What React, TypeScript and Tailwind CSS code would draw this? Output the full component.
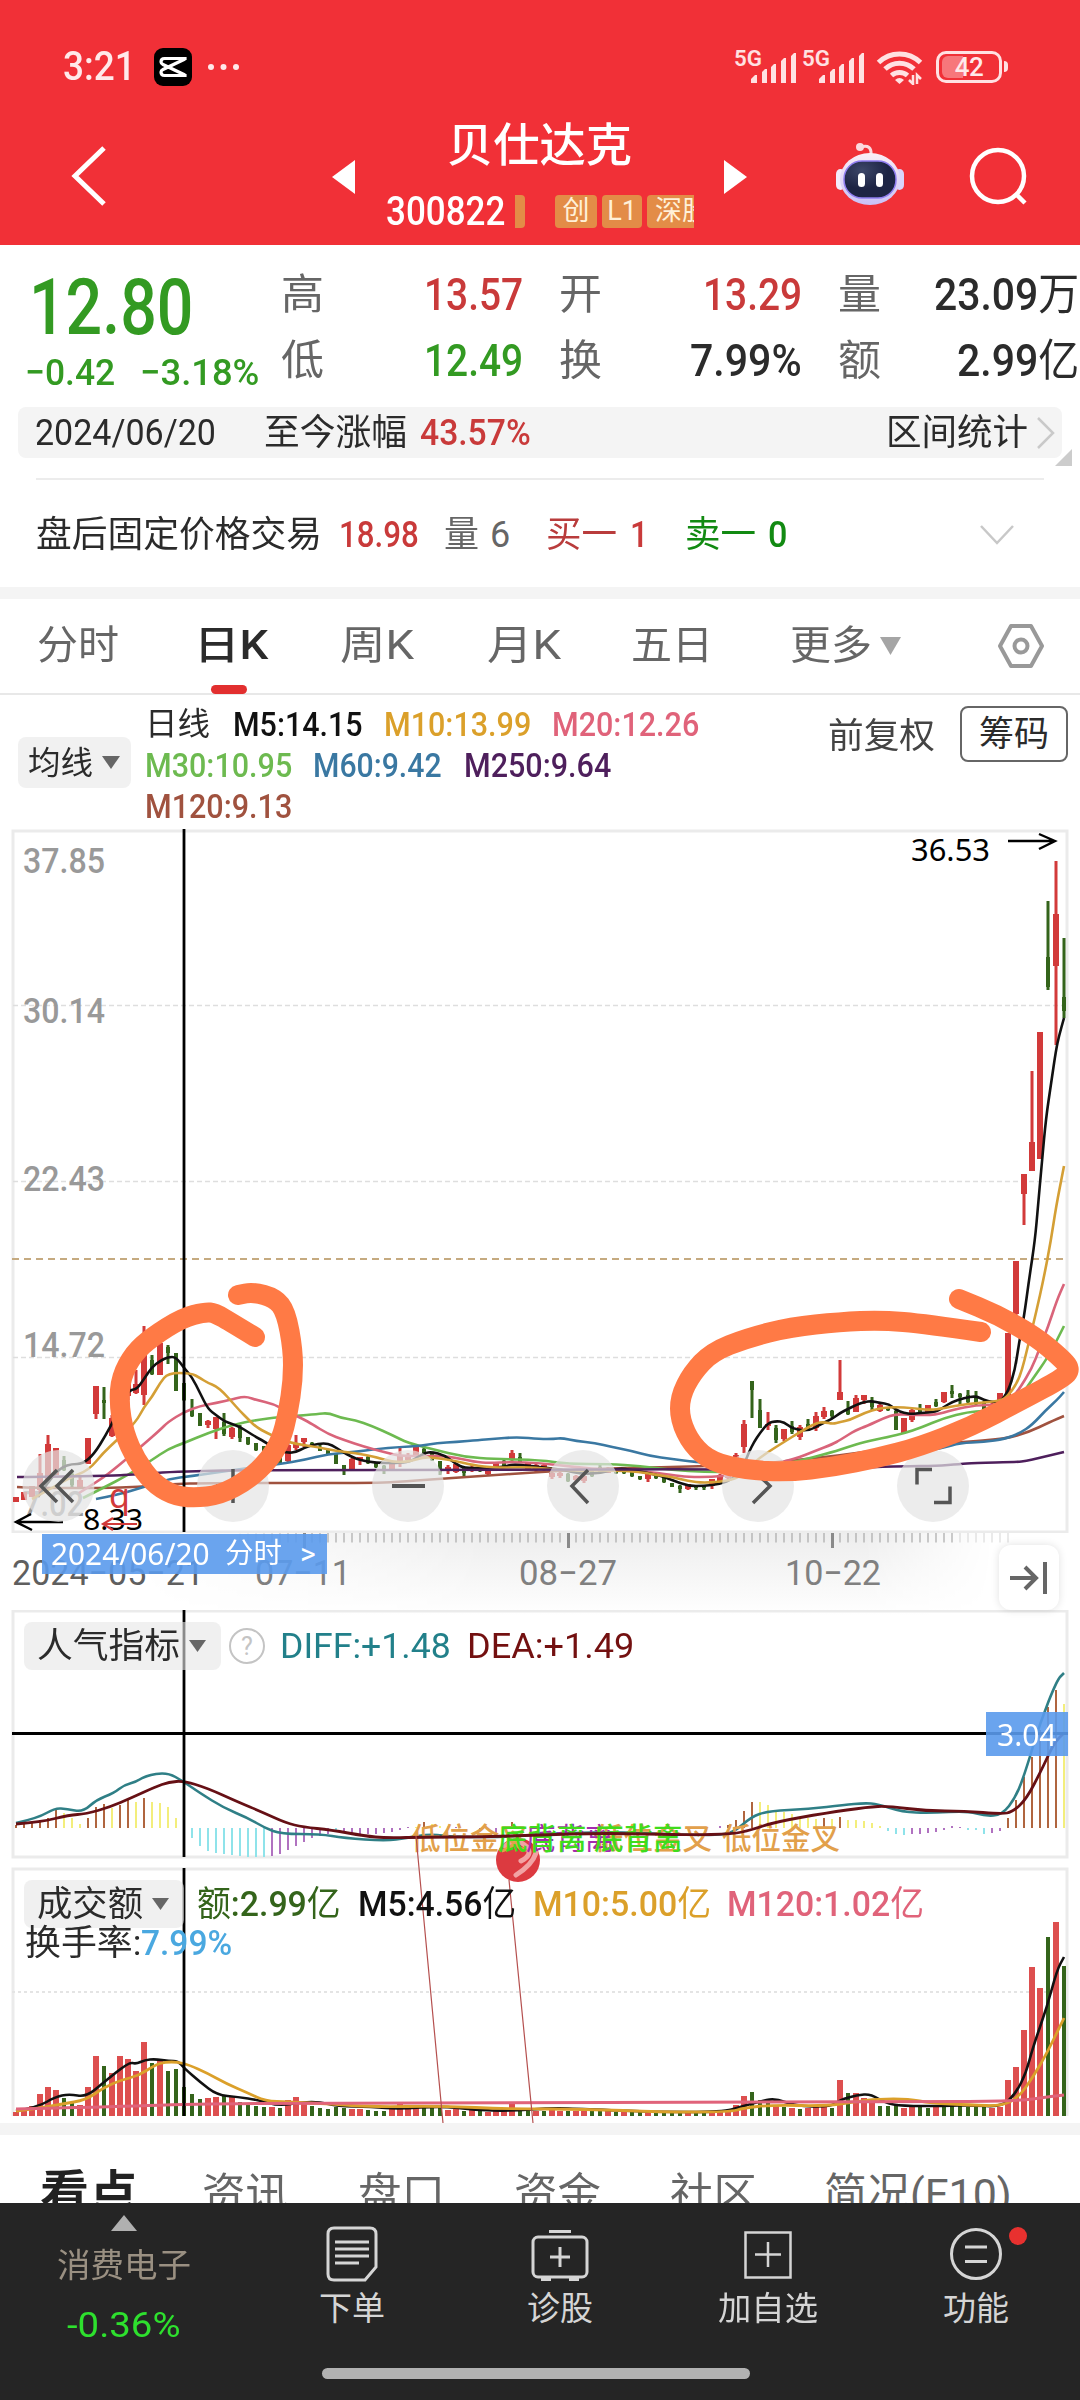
import React, { useLayoutEffect, useRef, useState } from 'react';

type Pt = [number, number];

const FONT = 'font-[Roboto,"Noto_Sans_CJK_SC",sans-serif]';

// Text squeezed or stretched to an exact width, like the condensed digits of the app font
const Fit = ({ w, className = '', children }: { w: number; className?: string; children: React.ReactNode }) => {
  const ref = useRef<HTMLSpanElement>(null);
  const [scale, setScale] = useState(1);

  useLayoutEffect(() => {
    if (ref.current && ref.current.offsetWidth) setScale(w / ref.current.offsetWidth);
  }, [w]);

  return (
    <span className={`block shrink-0 ${className}`} style={{ width: w }}>
      <span ref={ref} className="inline-block whitespace-nowrap origin-left" style={{ transform: `scaleX(${scale})` }}>
        {children}
      </span>
    </span>
  );
};

const pts = (s: string): Pt[] => s.split(' ').map((p) => p.split(',').map(Number) as Pt);

const smooth = (s: string) => {
  const p = pts(s);
  let d = `M${p[0][0]} ${p[0][1]}`;
  for (let i = 1; i < p.length - 1; i++) {
    const mx = (p[i][0] + p[i + 1][0]) / 2;
    const my = (p[i][1] + p[i + 1][1]) / 2;
    d += ` Q${p[i][0]} ${p[i][1]} ${mx} ${my}`;
  }
  const last = p[p.length - 1];
  return `${d} L${last[0]} ${last[1]}`;
};

const xAt = (i: number) => 16 + 8 * i;

const RED = '#d23a3a';
const GREEN = '#34641b';

// index, high, low, body top, body bottom, up/down
const CANDLES: [number, number, number, number, number, string][] = [
  [0, 1497, 1502, 1497, 1502, 'r'], [1, 1492, 1500, 1492, 1500, 'r'], [2, 1486, 1497, 1486, 1497, 'r'],
  [3, 1454, 1493, 1473, 1490, 'r'], [4, 1435, 1480, 1444, 1480, 'r'], [5, 1448, 1475, 1448, 1475, 'r'],
  [6, 1456, 1471, 1460, 1470, 'g'], [7, 1470, 1487, 1474, 1485, 'g'], [8, 1477, 1488, 1480, 1488, 'r'],
  [9, 1438, 1464, 1438, 1464, 'r'], [10, 1386, 1419, 1386, 1414, 'r'], [11, 1387, 1419, 1400, 1403, 'g'],
  [12, 1415, 1437, 1418, 1436, 'r'], [13, 1390, 1425, 1392, 1425, 'r'], [14, 1375, 1400, 1380, 1396, 'r'],
  [15, 1370, 1394, 1384, 1393, 'r'], [16, 1326, 1405, 1355, 1395, 'r'], [17, 1355, 1375, 1360, 1374, 'g'],
  [18, 1343, 1375, 1343, 1375, 'r'], [19, 1345, 1364, 1347, 1353, 'g'], [20, 1353, 1391, 1353, 1391, 'g'],
  [21, 1383, 1401, 1383, 1400, 'g'], [22, 1399, 1417, 1410, 1416, 'g'], [23, 1413, 1426, 1413, 1426, 'g'],
  [24, 1420, 1428, 1421, 1425, 'r'], [25, 1417, 1439, 1417, 1429, 'r'], [26, 1413, 1436, 1422, 1434, 'g'],
  [27, 1427, 1439, 1428, 1437, 'r'], [28, 1425, 1442, 1427, 1438, 'g'], [29, 1437, 1445, 1437, 1444, 'g'],
  [30, 1443, 1451, 1443, 1450, 'g'], [31, 1446, 1453, 1446, 1453, 'g'], [32, 1450, 1460, 1450, 1458, 'g'],
  [33, 1453, 1463, 1453, 1463, 'g'], [34, 1443, 1462, 1445, 1461, 'r'], [35, 1435, 1450, 1444, 1448, 'r'],
  [36, 1438, 1447, 1438, 1442, 'r'], [37, 1442, 1447, 1443, 1446, 'g'], [38, 1444, 1451, 1447, 1451, 'g'],
  [39, 1450, 1455, 1450, 1454, 'g'], [40, 1453, 1464, 1453, 1464, 'g'], [41, 1465, 1475, 1465, 1471, 'g'],
  [42, 1458, 1469, 1459, 1469, 'r'], [43, 1457, 1465, 1457, 1460, 'r'], [44, 1456, 1464, 1457, 1463, 'g'],
  [45, 1462, 1468, 1462, 1467, 'g'], [46, 1465, 1474, 1466, 1470, 'g'], [47, 1462, 1470, 1464, 1470, 'r'],
  [48, 1446, 1467, 1456, 1462, 'r'], [49, 1453, 1462, 1455, 1460, 'r'], [50, 1447, 1457, 1447, 1456, 'r'],
  [51, 1447, 1455, 1449, 1453, 'g'], [52, 1452, 1461, 1453, 1460, 'g'], [53, 1461, 1475, 1461, 1470, 'g'],
  [54, 1465, 1474, 1467, 1470, 'r'], [55, 1464, 1473, 1464, 1472, 'r'], [56, 1467, 1476, 1468, 1473, 'g'],
  [57, 1465, 1472, 1467, 1470, 'r'], [58, 1467, 1472, 1468, 1471, 'g'], [59, 1468, 1475, 1469, 1474, 'r'],
  [60, 1463, 1468, 1463, 1468, 'r'], [61, 1460, 1466, 1461, 1466, 'g'], [62, 1450, 1462, 1453, 1460, 'r'],
  [63, 1453, 1462, 1457, 1462, 'g'], [64, 1462, 1470, 1463, 1469, 'r'], [65, 1464, 1472, 1465, 1470, 'r'],
  [66, 1464, 1471, 1465, 1470, 'r'], [67, 1472, 1479, 1473, 1477, 'r'], [68, 1472, 1478, 1473, 1476, 'r'],
  [69, 1473, 1482, 1474, 1481, 'g'], [70, 1475, 1481, 1476, 1480, 'r'], [71, 1475, 1483, 1476, 1481, 'r'],
  [72, 1470, 1477, 1471, 1476, 'g'], [73, 1463, 1473, 1467, 1472, 'g'], [74, 1467, 1473, 1468, 1473, 'r'],
  [75, 1468, 1474, 1469, 1473, 'g'], [76, 1469, 1474, 1470, 1473, 'g'], [77, 1470, 1477, 1472, 1476, 'g'],
  [78, 1476, 1480, 1476, 1479, 'g'], [79, 1473, 1482, 1473, 1479, 'r'], [80, 1473, 1479, 1475, 1478, 'g'],
  [81, 1477, 1483, 1477, 1482, 'g'], [82, 1483, 1487, 1483, 1487, 'g'], [83, 1485, 1493, 1486, 1489, 'g'],
  [84, 1484, 1490, 1484, 1489, 'r'], [85, 1485, 1490, 1485, 1488, 'g'], [86, 1485, 1490, 1485, 1488, 'g'],
  [87, 1479, 1489, 1479, 1486, 'r'], [88, 1474, 1482, 1475, 1482, 'r'], [89, 1472, 1479, 1473, 1478, 'r'],
  [90, 1453, 1470, 1455, 1470, 'r'], [91, 1420, 1453, 1424, 1447, 'r'], [92, 1381, 1418, 1381, 1390, 'g'],
  [93, 1399, 1428, 1410, 1428, 'g'], [94, 1412, 1430, 1424, 1426, 'r'], [95, 1425, 1443, 1428, 1440, 'g'],
  [96, 1429, 1441, 1429, 1439, 'r'], [97, 1421, 1434, 1426, 1432, 'g'], [98, 1425, 1440, 1427, 1437, 'r'],
  [99, 1419, 1431, 1424, 1430, 'g'], [100, 1412, 1431, 1416, 1428, 'r'], [101, 1407, 1419, 1411, 1417, 'r'],
  [102, 1410, 1418, 1411, 1416, 'g'], [103, 1360, 1400, 1392, 1400, 'r'], [104, 1401, 1415, 1410, 1414, 'g'],
  [105, 1395, 1412, 1398, 1412, 'r'], [106, 1395, 1404, 1395, 1400, 'r'], [107, 1397, 1410, 1401, 1407, 'g'],
  [108, 1403, 1412, 1405, 1411, 'r'], [109, 1407, 1411, 1407, 1410, 'g'], [110, 1410, 1430, 1411, 1430, 'g'],
  [111, 1418, 1433, 1418, 1433, 'r'], [112, 1408, 1422, 1410, 1420, 'r'], [113, 1404, 1414, 1408, 1413, 'g'],
  [114, 1405, 1413, 1405, 1413, 'r'], [115, 1399, 1407, 1402, 1406, 'g'], [116, 1392, 1403, 1392, 1402, 'r'],
  [117, 1385, 1398, 1391, 1394, 'g'], [118, 1393, 1405, 1394, 1397, 'g'], [119, 1390, 1403, 1395, 1402, 'g'],
  [120, 1391, 1405, 1396, 1403, 'g'], [121, 1401, 1412, 1402, 1411, 'g'], [122, 1403, 1410, 1404, 1409, 'r'],
  [123, 1393, 1402, 1393, 1402, 'r'], [124, 1333, 1396, 1333, 1396, 'r'], [125, 1261, 1318, 1261, 1314, 'r'],
  [126, 1174, 1225, 1174, 1194, 'r'], [127, 1071, 1171, 1142, 1171, 'r'], [128, 1032, 1159, 1032, 1159, 'r'],
  [129, 901, 990, 957, 987, 'g'], [130, 861, 1045, 914, 966, 'r'], [131, 938, 1018, 997, 1011, 'g'],
];

const MA_LINES = [
  { color: '#a0523f', s: '17,1487 34,1488 103,1488 138,1487 172,1484 207,1483 372,1483 396,1482 437,1479 482,1476 540,1472 609,1468 678,1467 760,1464 795,1460 836,1456 877,1450 960,1442 1005,1439 1029,1432 1050,1422 1064,1416' },
  { color: '#6dba50', s: '83,1498 103,1488 128,1475 152,1460 168,1449 184,1443 208,1433 232,1425 256,1420 280,1417 296,1416 317,1414 329,1413 341,1418 355,1420 372,1426 392,1435 408,1443 432,1449 464,1457 496,1459 540,1460 568,1464 609,1464 640,1466 672,1470 705,1472 733,1472 764,1468 795,1462 833,1452 848,1447 864,1442 888,1437 905,1433 920,1428 944,1418 968,1412 984,1411 1008,1407 1020,1397 1032,1380 1048,1357 1057,1340 1064,1326' },
  { color: '#3a78a2', s: '96,1499 117,1495 144,1487 168,1479 192,1476 220,1472 248,1468 280,1464 304,1460 328,1454 355,1452 376,1449 400,1447 420,1446 437,1443 456,1442 479,1440 492,1439 517,1437 540,1439 554,1439 562,1438 576,1441 595,1443 612,1447 632,1451 650,1456 672,1459 695,1462 726,1464 781,1467 850,1462 905,1455 943,1448 960,1443 984,1442 1005,1439 1020,1433 1032,1425 1046,1410 1057,1400 1064,1392' },
  { color: '#d9647a', s: '79,1493 100,1480 117,1467 144,1444 160,1430 168,1422 184,1412 200,1406 216,1403 234,1399 241,1397 248,1397 256,1400 274,1404 288,1412 303,1419 312,1424 328,1434 344,1440 365,1447 384,1452 400,1456 424,1456 448,1456 475,1462 489,1463 510,1462 540,1463 574,1467 609,1470 643,1471 672,1475 688,1477 712,1477 733,1475 760,1467 795,1459 815,1451 833,1444 840,1440 856,1430 867,1426 884,1418 896,1414 912,1415 936,1415 952,1410 976,1405 1000,1405 1012,1398 1020,1388 1032,1368 1039,1350 1048,1327 1057,1300 1064,1284' },
  { color: '#111111', s: '38,1497 52,1476 66,1464 88,1464 112,1425 122,1400 130,1390 137,1389 144,1379 152,1367 160,1361 168,1357 176,1357 184,1368 192,1377 200,1393 208,1409 216,1415 224,1421 232,1424 240,1427 248,1432 256,1437 267,1443 275,1450 288,1453 296,1452 304,1448 312,1445 324,1443 332,1445 341,1451 352,1457 360,1460 376,1463 396,1463 410,1462 424,1453 432,1452 444,1455 456,1464 464,1468 482,1468 504,1467 513,1464 540,1467 564,1470 581,1474 602,1473 619,1468 632,1470 648,1473 661,1476 672,1480 688,1486 704,1486 720,1484 733,1479 743,1467 749,1452 754,1442 760,1433 768,1423 776,1421 784,1422 793,1429 809,1431 821,1424 832,1419 840,1413 848,1409 856,1405 864,1402 872,1401 880,1403 889,1404 896,1410 904,1413 912,1414 920,1413 936,1412 944,1407 952,1402 964,1398 976,1396 984,1400 992,1402 1000,1402 1008,1392 1015,1370 1019,1343 1024,1317 1029,1280 1035,1240 1038,1206 1042,1161 1046,1118 1051,1084 1056,1050 1059,1036 1064,1018' },
  { color: '#d49f35', s: '32,1499 52,1488 69,1478 89,1470 103,1453 117,1440 136,1422 144,1407 152,1397 160,1383 168,1373 191,1373 200,1378 208,1383 216,1386 224,1393 232,1402 240,1411 248,1419 256,1427 267,1433 282,1440 296,1444 317,1447 336,1451 355,1453 376,1457 392,1462 408,1462 424,1457 437,1458 456,1461 472,1465 496,1468 520,1467 540,1468 574,1471 609,1470 640,1472 657,1475 672,1477 688,1481 704,1483 726,1481 740,1477 753,1463 768,1452 784,1442 800,1432 816,1423 824,1422 833,1424 840,1422 850,1420 864,1413 880,1408 896,1407 912,1408 928,1410 939,1409 960,1405 977,1403 1000,1401 1008,1396 1017,1383 1022,1370 1027,1350 1036,1313 1044,1277 1051,1240 1056,1207 1064,1166' },
  { color: '#4e1f5c', s: '17,1477 103,1476 144,1474 168,1472 207,1471 238,1470 540,1470 678,1469 781,1470 905,1466 936,1466 960,1464 974,1463 1017,1462 1026,1461 1039,1458 1064,1452' },
];

const SCRIBBLES = [
  '255,1337 232,1323 215,1313 205,1312 182,1318 152,1337 134,1353 121,1377 119,1403 124,1433 136,1460 152,1482 172,1495 193,1498 220,1495 248,1480 269,1460 281,1440 288,1413 293,1380 293,1350 286,1312 275,1298 253,1292 238,1295',
  '981,1332 926,1324 881,1320 840,1322 791,1327 747,1338 712,1352 692,1373 680,1397 680,1420 692,1445 712,1462 747,1470 788,1472 833,1467 877,1458 919,1447 970,1427 1022,1400 1063,1378 1071,1369 1060,1357 1036,1337 998,1315 959,1299',
];

// index, end of the bar, color
const B = '#b0653f';
const Y = '#f3ee7c';
const C = '#8fe3ea';
const P = '#b072c0';
const MACD: [number, number, string][] = [
  [0, 1825, B], [1, 1824, B], [2, 1823, B], [3, 1820, B], [4, 1818, B], [5, 1810, B], [6, 1813, Y], [7, 1818, Y],
  [8, 1824, Y], [9, 1818, B], [10, 1807, B], [11, 1804, B], [12, 1808, Y], [13, 1805, B], [14, 1800, B],
  [15, 1802, Y], [16, 1798, B], [17, 1802, Y], [18, 1803, Y], [19, 1807, Y], [20, 1818, Y],
  [22, 1838, C], [23, 1846, C], [24, 1851, C], [25, 1853, C], [26, 1854, C], [27, 1855, C], [28, 1856, C],
  [29, 1857, C], [30, 1857, C], [31, 1857, C], [32, 1856, P], [33, 1854, P], [34, 1850, P], [35, 1846, P],
  [36, 1842, P], [37, 1838, P], [38, 1836, P], [39, 1834, P], [40, 1832, C], [41, 1833, P], [42, 1834, P],
  [43, 1834, P], [44, 1834, P], [45, 1834, P], [46, 1833, P], [47, 1832, P], [48, 1830, P], [49, 1827, P],
  [50, 1827, Y], [51, 1822, B], [52, 1824, Y], [53, 1826, Y], [54, 1826, Y], [55, 1827, P], [58, 1829, P],
  [60, 1834, P], [62, 1822, B], [63, 1826, Y], [65, 1826, Y], [88, 1826, P], [89, 1825, B],
  [90, 1820, B], [91, 1811, B], [92, 1802, B], [93, 1802, Y], [94, 1805, Y], [95, 1810, Y], [96, 1812, Y],
  [97, 1814, Y], [98, 1817, Y], [99, 1818, Y], [100, 1819, Y], [101, 1818, B], [102, 1819, Y], [103, 1817, B],
  [104, 1820, Y], [105, 1820, Y], [106, 1821, Y], [107, 1823, Y], [108, 1826, Y], [109, 1831, C], [110, 1834, C],
  [111, 1835, C], [112, 1834, P], [113, 1834, P], [114, 1833, P], [115, 1832, P], [116, 1830, P], [117, 1826, P],
  [118, 1827, P], [119, 1830, C], [120, 1830, C], [121, 1834, C], [122, 1833, P], [123, 1831, P],
  [124, 1818, B], [125, 1800, B], [126, 1777, B], [127, 1757, B], [128, 1730, B], [129, 1707, B], [130, 1690, B],
  [131, 1704, Y],
];

const DIFF = '16,1823 38,1818 55,1808 67,1809 83,1812 96,1800 114,1793 124,1785 136,1782 145,1776 167,1772 184,1782 200,1793 224,1808 248,1818 265,1828 281,1834 320,1834 344,1838 386,1841 406,1838 430,1834 455,1837 510,1837 537,1834 606,1832 640,1833 689,1835 716,1835 733,1833 751,1817 768,1811 809,1809 844,1805 864,1803 878,1804 902,1812 930,1813 968,1811 985,1816 1002,1815 1016,1797 1026,1770 1040,1723 1057,1680 1064,1673';
const DEA = '16,1824 41,1822 69,1815 86,1814 110,1807 131,1798 155,1787 169,1782 184,1781 207,1788 238,1802 262,1812 286,1823 303,1827 331,1830 365,1836 386,1838 427,1837 482,1837 537,1835 606,1833 689,1835 733,1834 751,1830 775,1822 826,1813 868,1807 888,1806 926,1811 964,1811 1002,1814 1012,1812 1026,1800 1043,1767 1054,1743 1064,1733';

// bar tops, one entry per day
const VOLUME =
  '2112r 2108r 2106r 2094r 2087r 2090r 2098g 2103g 2105r 2087r 2056r 2066g 2073r 2056r 2059r 2071r 2042r 2063g 2060r 2071g 2069g 2087g 2094g 2099g 2098r 2097r 2095g 2097r 2102g 2105g 2106g 2107g 2107r 2108g 2100r 2097r 2102r 2106g 2108g 2109g 2107g 2108g 2109r 2109r 2110g 2111g 2111g 2108r 2104r 2107r 2107r 2106g 2107g 2108g 2110r 2109r 2111g 2109r 2111g 2112r 2110r 2109r 2104r 2108g 2110g 2111r 2111g 2110r 2111r 2111g 2111r 2111r 2111g 2111g 2111r 2112g 2112r 2112g 2112g 2112r 2112g 2112g 2112g 2113g 2113r 2113g 2113g 2112r 2112r 2110r 2105r 2096r 2092g 2100g 2102g 2106r 2107g 2108r 2109g 2108r 2105r 2107r 2108g 2080r 2093g 2093r 2098r 2100r 2106g 2106g 2105g 2108r 2107r 2106g 2108g 2106r 2106g 2105g 2105g 2107g 2105g 2107g 2108r 2107r 2080r 2067r 2030r 1967r 1988r 1937g 1922r 1966g'
    .split(' ')
    .map((v) => ({ top: parseInt(v), up: v.endsWith('r') }));

const VOL_MA5 = '16,2111 38,2107 55,2097 69,2094 86,2097 103,2083 129,2062 136,2064 145,2060 155,2059 169,2061 178,2061 184,2068 200,2082 217,2095 238,2097 258,2100 279,2106 303,2102 320,2102 337,2106 372,2107 399,2109 441,2106 475,2110 510,2111 551,2108 585,2109 654,2112 723,2112 740,2107 758,2102 775,2098 795,2106 830,2107 840,2100 857,2095 871,2094 885,2103 902,2106 944,2106 971,2105 1002,2107 1016,2093 1026,2073 1033,2047 1047,2007 1057,1970 1064,1957';
const VOL_MA10 = '16,2111 41,2108 62,2104 86,2100 103,2088 121,2080 138,2076 155,2065 165,2062 178,2062 189,2065 207,2073 227,2084 248,2093 265,2101 289,2102 331,2104 372,2107 441,2106 510,2109 585,2109 661,2112 730,2112 744,2108 771,2105 826,2106 854,2102 878,2099 909,2099 930,2103 971,2105 1002,2106 1019,2097 1033,2077 1047,2053 1064,2018';
const VOL_MA120 = '16,2109 103,2107 193,2104 317,2103 900,2102 1019,2101 1047,2097 1064,2095';

const Signal = () => (
  <svg className="overflow-visible" width="64" height="36" viewBox="0 0 64 36" fill="#ffe1e2">
    <text x="0" y="17" fontSize="22" fontWeight="600" textLength="28" lengthAdjust="spacingAndGlyphs">5G</text>
    <path d="M17 34v-4l4-4h2v8zM28 34V23l3-3h2v14zM37 34V18l3-3h2v19zM47 34V12l3-3h2v25zM57 34V7l3-3h2v30z" />
  </svg>
);

const StatusBar = () => (
  <div className="flex items-center h-[133px] pl-[63px] text-[#ffe9ea]">
    <Fit w={73} className="text-[41px] leading-none font-medium">3:21</Fit>
    <svg className="ml-[18px]" width="38" height="38" viewBox="0 0 38 38" fill="none">
      <rect width="38" height="38" rx="9" fill="#000" />
      <path d="M31 12v-1.500H10.500Q7 10.500 7 14q0 1.500 2 2.500l22 10.500M31 26v1.500H10.500Q7 27.500 7 24q0-1.500 2-2.500L31 11" stroke="#fff" strokeWidth="3.200" />
    </svg>
    <svg className="ml-[15px]" width="36" height="8" viewBox="0 0 36 8" fill="#ffe9ea">
      <circle cx="4" cy="4" r="3" />
      <circle cx="16.500" cy="4" r="3" />
      <circle cx="29" cy="4" r="3" />
    </svg>
    <div className="flex items-center ml-[491px]">
      <Signal />
      <div className="ml-1"><Signal /></div>
      <svg className="ml-[10px]" width="48" height="36" viewBox="0 0 48 36" fill="none" stroke="#ffe1e2" strokeWidth="5">
        <path d="M2.500 13.500a30 30 0 0 1 42 0M9 20a21 21 0 0 1 29 0M15.500 26.500a12 12 0 0 1 16 0" />
        <path d="M23.500 35l-4.500-4q4.500-4 9 0z" fill="#ffe1e2" stroke="none" />
        <path d="M37 26v9l-4-4M41 35v-9l4 4" strokeWidth="2.500" />
      </svg>
      <div className="flex items-center ml-[12px]">
        <div className="relative flex items-center justify-center w-[66px] h-[32px] rounded-[10px] border-[3px] border-[#ffe1e2]">
          <div className="absolute left-[3px] top-[2px] w-[21px] h-[22px] rounded-l-[6px] bg-[#f7777b]" />
          <span className="relative text-[26px] leading-none tracking-tight font-medium">42</span>
        </div>
        <div className="ml-[2px] w-1 h-[11px] rounded-r bg-[#ffe1e2]" />
      </div>
    </div>
  </div>
);

const Robot = () => (
  <svg width="70" height="64" viewBox="0 0 70 64">
    <defs>
      <linearGradient id="shell" x1="0" y1="0" x2="0" y2="1">
        <stop offset="0" stopColor="#fbeef6" />
        <stop offset="1" stopColor="#c9c1f6" />
      </linearGradient>
      <radialGradient id="face" cx=".35" cy=".25">
        <stop offset="0" stopColor="#3c4668" />
        <stop offset="1" stopColor="#1d2444" />
      </radialGradient>
    </defs>
    <path d="M26 5q11-3 10 8" fill="none" stroke="#fbd9de" strokeWidth="3" />
    <circle cx="25" cy="5" r="4" fill="#fbd9de" />
    <rect x="1" y="27" width="9" height="21" rx="5" fill="#f3ecfb" />
    <rect x="60" y="27" width="9" height="21" rx="5" fill="#d9d4fa" />
    <ellipse cx="35" cy="37" rx="30" ry="26" fill="url(#shell)" />
    <rect x="9" y="19" width="52" height="37" rx="18" fill="url(#face)" stroke="#8f7df0" strokeWidth="1.500" />
    <rect x="23" y="31" width="7" height="14" rx="3.500" fill="#fff" />
    <rect x="41" y="31" width="7" height="14" rx="3.500" fill="#fff" />
  </svg>
);

const Header = () => (
  <div className="h-[245px] bg-[#f13037] text-white">
    <StatusBar />
    <div className="flex items-start">
      <svg className="ml-[70px] mt-[11px] shrink-0" width="38" height="64" viewBox="0 0 38 64" fill="none" stroke="#fff" strokeWidth="5">
        <path d="M34 4L5 32l29 28" />
      </svg>
      <svg className="ml-[224px] mt-[27px] shrink-0" width="23" height="34" fill="#fff"><path d="M23 0v34L0 17z" /></svg>
      <div className="-mt-[14px] ml-[31px] w-[339px] shrink-0 flex flex-col">
        <div className="flex h-[52px] items-center ml-[61px]">
          <Fit w={185} className="text-[46px] leading-none font-medium">贝仕达克</Fit>
        </div>
        <div className="flex h-[33px] items-center mt-[24px]">
          <Fit w={119} className="text-[40px] leading-none font-medium">300822</Fit>
          <div className="flex w-[179px] h-[33px] ml-[10px] overflow-hidden text-[27px] leading-[33px] text-[#fff0d8]">
            <div className="w-[10px] shrink-0 rounded-r-[4px] bg-[#e38c47]" />
            <div className="w-[42px] ml-[30px] shrink-0 rounded-[4px] bg-[#e38c47] text-center">创</div>
            <div className="w-[40px] ml-[5px] shrink-0 rounded-[4px] bg-[#e38c47] text-center">L1</div>
            <div className="w-[72px] ml-[5px] pl-[8px] shrink-0 rounded-[4px] bg-[#e38c47]">深股</div>
          </div>
        </div>
      </div>
      <svg className="-ml-[1px] mt-[27px] shrink-0" width="23" height="34" fill="#fff"><path d="M0 0v34l23-17z" /></svg>
      <div className="ml-[88px] mt-[9px] shrink-0"><Robot /></div>
      <svg className="ml-[64px] mt-[13px] shrink-0" width="60" height="60" viewBox="0 0 60 60" fill="none" stroke="#fff" strokeWidth="4.500">
        <circle cx="29" cy="30" r="26" />
        <path d="M47 48l9 9" />
      </svg>
    </div>
  </div>
);

const Quote = () => (
  <div className="flex h-[162px] pt-[17px] text-[44px] leading-[66px] font-medium text-[#2b2b2b]">
    <div className="w-[256px] ml-[25px] shrink-0 text-[#339a22]">
      <Fit w={164} className="ml-[4px] text-[77px] leading-[92px] font-medium">12.80</Fit>
      <div className="flex text-[37px] leading-[38px]">
        <Fit w={90}>−0.42</Fit>
        <Fit w={119} className="ml-[25px]">−3.18%</Fit>
      </div>
    </div>
    <div className="w-[242px] shrink-0">
      <div className="flex justify-between">
        <Fit w={43} className="font-normal text-[#666] text-[42px]">高</Fit>
        <Fit w={99} className="text-[#c93a3a]">13.57</Fit>
      </div>
      <div className="flex justify-between">
        <Fit w={43} className="font-normal text-[#666] text-[42px]">低</Fit>
        <Fit w={99} className="text-[#339a22]">12.49</Fit>
      </div>
    </div>
    <div className="w-[243px] ml-[36px] shrink-0">
      <div className="flex justify-between">
        <Fit w={43} className="font-normal text-[#666] text-[42px]">开</Fit>
        <Fit w={99} className="text-[#c93a3a]">13.29</Fit>
      </div>
      <div className="flex justify-between">
        <Fit w={43} className="font-normal text-[#666] text-[42px]">换</Fit>
        <Fit w={112}>7.99%</Fit>
      </div>
    </div>
    <div className="w-[241px] ml-[36px] shrink-0">
      <div className="flex justify-between">
        <Fit w={43} className="font-normal text-[#666] text-[42px]">量</Fit>
        <Fit w={145}>23.09<span className="font-normal">万</span></Fit>
      </div>
      <div className="flex justify-between">
        <Fit w={43} className="font-normal text-[#666] text-[42px]">额</Fit>
        <Fit w={122}>2.99<span className="font-normal">亿</span></Fit>
      </div>
    </div>
  </div>
);

const RangeBar = () => (
  <div className="relative flex items-center h-[51px] mx-[18px] rounded-[8px] bg-[#f4f4f4] text-[37px] leading-none text-[#2b2b2b]">
    <Fit w={181} className="ml-[17px]">2024/06/20</Fit>
    <Fit w={143} className="ml-[48px] text-[36px]">至今涨幅</Fit>
    <Fit w={111} className="ml-[13px] font-medium text-[#c93a3a]">43.57%</Fit>
    <Fit w={142} className="ml-[355px] text-[36px]">区间统计</Fit>
    <svg className="ml-[9px]" width="18" height="32" viewBox="0 0 18 32" fill="none" stroke="#c9c9c9" strokeWidth="2.500"><path d="M1 1l15 15L1 31" /></svg>
    <svg className="absolute left-[1037px] top-[42px]" width="17" height="17" fill="#ccc"><path d="M17 0v17H0z" /></svg>
  </div>
);

const AfterHours = () => (
  <div className="h-[129px] pt-[20px] bg-white">
    <div className="mx-[36px] h-[2px] bg-[#ececec]" />
    <div className="flex items-center h-[109px] text-[36px] leading-none text-[#2b2b2b]">
      <Fit w={286} className="ml-[36px]">盘后固定价格交易</Fit>
      <Fit w={80} className="ml-[17px] font-medium text-[#c93a3a]">18.98</Fit>
      <Fit w={35} className="ml-[25px] text-[#666]">量</Fit>
      <Fit w={20} className="ml-[11px] text-[#666]">6</Fit>
      <Fit w={71} className="ml-[36px] text-[#b93c3c]">买一</Fit>
      <Fit w={18} className="ml-[13px] font-medium text-[#c93a3a]">1</Fit>
      <Fit w={71} className="ml-[37px] text-[#128a12]">卖一</Fit>
      <Fit w={19} className="ml-[12px] font-medium text-[#128a12]">0</Fit>
      <svg className="ml-[193px]" width="34" height="20" viewBox="0 0 34 20" fill="none" stroke="#c8c8c8" strokeWidth="2.500"><path d="M1 1l16 17L33 1" /></svg>
    </div>
  </div>
);

const PeriodTabs = () => (
  <div className="relative flex items-center h-[96px] border-b-2 border-[#e8e8e8] text-[40px] leading-none text-[#666]">
    <Fit w={82} className="ml-[37px]">分时</Fit>
    <Fit w={74} className="ml-[75px] font-medium text-[#2b2b2b]">日K</Fit>
    <Fit w={74} className="ml-[72px]">周K</Fit>
    <Fit w={74} className="ml-[73px]">月K</Fit>
    <Fit w={82} className="ml-[70px]">五日</Fit>
    <Fit w={82} className="ml-[77px]">更多</Fit>
    <svg className="ml-[8px]" width="21" height="18" fill="#a5a5a5"><path d="M0 0h21L10.500 18z" /></svg>
    <svg className="ml-[96px]" width="48" height="46" viewBox="0 0 48 46" fill="none" stroke="#999" strokeWidth="4" strokeLinejoin="round">
      <path d="M14 3h20l11 20-11 20H14L3 23z" />
      <circle cx="24" cy="23" r="6.500" />
    </svg>
    <div className="absolute left-[211px] top-[86px] w-[36px] h-[9px] rounded-[5px] bg-[#e22f2f]" />
  </div>
);

const Legend = () => (
  <div className="flex h-[134px] text-[33px] leading-[41px] font-medium">
    <div className="flex items-center ml-[18px] mt-[42px] w-[113px] h-[51px] rounded-[8px] bg-[#f1f1f1] text-[#2b2b2b]">
      <Fit w={65} className="ml-[10px] text-[32px] font-normal leading-none">均线</Fit>
      <svg className="ml-[9px]" width="18" height="13" fill="#666"><path d="M0 0h18L9 13z" /></svg>
    </div>
    <div className="ml-[14px] mt-[9px] w-[660px]">
      <div className="flex">
        <Fit w={65} className="text-[32px] font-normal text-[#2b2b2b]">日线</Fit>
        <Fit w={130} className="ml-[23px] text-[#111]">M5:14.15</Fit>
        <Fit w={147} className="ml-[21px] text-[#dba02a]">M10:13.99</Fit>
        <Fit w={147} className="ml-[21px] text-[#e0637a]">M20:12.26</Fit>
      </div>
      <div className="flex">
        <Fit w={147} className="text-[#6dba50]">M30:10.95</Fit>
        <Fit w={129} className="ml-[21px] text-[#3a78a2]">M60:9.42</Fit>
        <Fit w={147} className="ml-[22px] text-[#4e1f5c]">M250:9.64</Fit>
      </div>
      <Fit w={147} className="text-[#a0523f]">M120:9.13</Fit>
    </div>
    <Fit w={107} className="ml-[23px] mt-[21px] text-[35px] font-normal text-[#444]">前复权</Fit>
    <div className="flex items-center justify-center ml-[25px] mt-[11px] w-[108px] h-[56px] rounded-[8px] border-2 border-[#666]">
      <Fit w={70} className="text-[35px] leading-none font-normal text-[#2b2b2b]">筹码</Fit>
    </div>
  </div>
);

const PRICE_LABELS: [string, number][] = [['37.85', 860], ['30.14', 1010], ['22.43', 1178], ['14.72', 1344], ['7.02', 1503]];

const PriceChart = () => (
  <svg className="block" width="1080" height="704" viewBox="0 829 1080 704" fill="none">
    <path d="M13 1532V831h1054v701z" stroke="#ebebeb" strokeWidth="3" />
    <path d="M13 1005.500h1054M13 1181.500h1054M13 1357.500h1054" stroke="#dedede" strokeWidth="1.500" strokeDasharray="5 3" />
    <path d="M12 1259h1054" stroke="#c5aa80" strokeWidth="2" strokeDasharray="7 5" />
    {PRICE_LABELS.map(([t, y]) => (
      <text key={t} x="23" y={y + 12.5} fontSize="35" fill="#999" fontWeight="500" textLength={t.length > 4 ? 82 : 61} lengthAdjust="spacingAndGlyphs">{t}</text>
    ))}
    {CANDLES.map(([i, hi, lo, top, bot, c]) => (
      <g key={i} fill={c === 'r' ? RED : GREEN}>
        <rect x={xAt(i) - 1.5} y={hi} width="3" height={lo - hi} />
        <rect x={xAt(i) - (c === 'r' ? 3 : 2)} y={top} width={c === 'r' ? 6 : 4} height={bot - top} />
      </g>
    ))}
    {MA_LINES.map((l) => (
      <path key={l.color} d={smooth(l.s)} stroke={l.color} strokeWidth="2.600" />
    ))}
    <text x="911" y="861" fontSize="31" fill="#000" className="font-['Noto_Sans']" textLength="79" lengthAdjust="spacingAndGlyphs">36.53</text>
    <path d="M1008 841h46M1039 834l16 7-16 8" stroke="#000" strokeWidth="2.400" />
    <path d="M63 1522H17M31 1514l-15 8 16 8" stroke="#000" strokeWidth="2.400" />
    <text x="83" y="1530" fontSize="29" fill="#000" className="font-['Noto_Sans']" textLength="60" lengthAdjust="spacingAndGlyphs">8.33</text>
    <text x="109" y="1508" fontSize="34" fill={RED} className="font-['Noto_Sans']">q</text>
    <path d="M137 1524h-33M113 1518l-10 6 10 6" stroke={RED} strokeWidth="2.200" />
    <path d="M184 829v703" stroke="#000" strokeWidth="2.800" />
    {[58.5, 233, 408, 583, 758, 933].map((x) => (
      <circle key={x} cx={x} cy="1486" r="36" fill="#e4e4e4" fillOpacity=".7" />
    ))}
    <g stroke="#555" strokeWidth="3.500">
      <path d="M57 1470l-16 16 16 16M73 1470l-16 16 16 16" />
      <path d="M216 1486h34M233 1469v34" />
      <path d="M392 1486h33" strokeWidth="4" />
      <path d="M588 1470l-16 16 16 17" />
      <path d="M753 1470l17 16-17 17" />
      <path d="M932 1469.500h-15v15M934 1502.500h16v-16" />
    </g>
    {SCRIBBLES.map((s) => (
      <path key={s} d={smooth(s)} stroke="#ff7a45" strokeWidth="20" strokeLinecap="round" strokeLinejoin="round" />
    ))}
  </svg>
);

const DateAxis = () => (
  <div className="relative h-[77px]">
    <div className="absolute inset-x-0 -top-px h-[84px] bg-gradient-to-b from-[#ededed] to-white [mask-image:linear-gradient(90deg,transparent_12%,#000_45%,#000_80%,transparent_92%)]" />
    <svg className="absolute left-0 top-0" width="1080" height="77" viewBox="0 1533 1080 77">
      {Array.from({ length: 98 }, (_, k) => (
        <path key={k} d={`M${xAt(k + 27)} 1533v9.500`} stroke="#a8a8a8" strokeWidth="1.200" opacity={k < 10 ? k / 10 : k > 90 ? 0.4 : 1} />
      ))}
      <path d="M304.500 1533v15M568.500 1533v15M832.500 1533v15" stroke="#8a8a8a" strokeWidth="3" />
      <g fontSize="35" fill="#808080">
        <text x="12" y="1585" fill="#5f5f5f" textLength="192" lengthAdjust="spacingAndGlyphs">2024−05−21</text>
        <text x="255" y="1585" textLength="96" lengthAdjust="spacingAndGlyphs">07−11</text>
        <text x="519" y="1585" textLength="98" lengthAdjust="spacingAndGlyphs">08−27</text>
        <text x="785" y="1585" textLength="96" lengthAdjust="spacingAndGlyphs">10−22</text>
      </g>
    </svg>
    <div className="absolute left-[42px] top-[1px] flex items-center w-[285px] h-[40px] bg-[#5a9aec]/90 text-[30px] leading-none text-white">
      <Fit w={159} className="ml-[9px] font-['Noto_Sans']">2024/06/20</Fit>
      <Fit w={57} className="ml-[15px] text-[28px]">分时</Fit>
      <Fit w={16} className="ml-[18px]">&gt;</Fit>
    </div>
    <div className="absolute left-[999px] top-[12px] z-10 flex items-center justify-center w-[60px] h-[65px] rounded-[12px] bg-white shadow-[0_0_8px_rgba(0,0,0,0.12)]">
      <svg width="38" height="34" viewBox="0 0 38 34" fill="none" stroke="#666" strokeWidth="4"><path d="M0 17h26M15 6l11 11-11 11M35 1v32" /></svg>
    </div>
  </div>
);

const SubPanels = () => (
  <div className="relative h-[513px] font-normal">
    <svg className="absolute left-0 top-0" width="1080" height="513" viewBox="0 1610 1080 513" fill="none">
      <path d="M13 1611h1054v246H13zM13 2116V1869h1054v247" stroke="#ebebeb" strokeWidth="3" />
      {MACD.map(([i, end, c]) => (
        <path key={i} d={`M${xAt(i)} 1828V${end}`} stroke={c} strokeWidth="2" />
      ))}
      <path d={smooth(DIFF)} stroke="#2f7f86" strokeWidth="2.600" />
      <path d="M12 1992h1044" stroke="#e4e4e4" strokeWidth="2" strokeDasharray="3 3" />
      {VOLUME.map((v, i) => (
        <rect key={i} x={xAt(i) - (v.up ? 3 : 2)} y={v.top} width={v.up ? 6 : 4} height={2116 - v.top} fill={v.up ? '#dd4f4f' : GREEN} />
      ))}
      <path d={smooth(VOL_MA5)} stroke="#111" strokeWidth="2.600" />
      <path d={smooth(VOL_MA10)} stroke="#dba02a" strokeWidth="2.800" />
      <path d={smooth(VOL_MA120)} stroke="#e0637a" strokeWidth="3" />
      <circle cx="518" cy="1860" r="22" fill="#dc3a40" />
      <path d="M505 1846q12-9 22 1 6 8-6 14M516 1875q16-10 20-22" stroke="#f6b5b5" strokeWidth="5" strokeLinecap="round" opacity=".85" />
      <g fontSize="29.5">
        <g fill="#e2a04b" fontWeight="500">
          <text x="411" y="1849">低位金叉</text>
          <text x="594" y="1849">低位金叉</text>
          <text x="722" y="1849">低位金叉</text>
        </g>
        <text x="526" y="1849" fill="#a42bb0">底背离</text>
        <g fill="#3fdc1c">
          <text x="498" y="1849" fontWeight="500">底背离</text>
          <text x="594" y="1849" fontWeight="500">底背离</text>
        </g>
      </g>
      <path d={smooth(DEA)} stroke="#661015" strokeWidth="2.800" />
      <path d="M416 1836L443 2123M509 1880L533 2123" stroke="#b5504f" strokeWidth="1.200" />
      <path d="M12 1733.500h1056" stroke="#000" strokeWidth="3" />
      <path d="M184 1610v247M184 1868v248" stroke="#000" strokeWidth="2.800" />
    </svg>
    <div className="relative h-[258px] pt-[12px]">
      <div className="flex items-center h-[48px] text-[35px] leading-none">
        <div className="flex items-center ml-[24px] w-[197px] h-[48px] rounded-[8px] bg-[#e6e6e6]/60 text-[#2b2b2b]">
          <Fit w={143} className="ml-[13px]">人气指标</Fit>
          <svg className="ml-[9px]" width="17" height="12" fill="#666"><path d="M0 0h17L8.500 12z" /></svg>
        </div>
        <div className="flex items-center justify-center ml-[8px] w-[36px] h-[36px] rounded-full border-[2.500px] border-[#c4c4c4] text-[25px] text-[#c4c4c4]">?</div>
        <Fit w={171} className="ml-[15px] text-[#22808a]">DIFF:+1.48</Fit>
        <Fit w={167} className="ml-[16px] text-[#731010]">DEA:+1.49</Fit>
      </div>
      <div className="absolute left-[986px] top-[102px] flex items-center justify-center w-[82px] h-[44px] bg-[#5a9aec]/90">
        <Fit w={60} className="font-['Noto_Sans'] text-[31px] leading-none text-white">3.04</Fit>
      </div>
    </div>
    <div className="relative pt-[12px] text-[35px] leading-none font-medium">
      <div className="flex items-center h-[48px]">
        <div className="flex items-center ml-[24px] w-[160px] h-[48px] rounded-[8px] bg-[#e6e6e6]/60 text-[#2b2b2b] font-normal">
          <Fit w={106} className="ml-[13px]">成交额</Fit>
          <svg className="ml-[9px]" width="17" height="12" fill="#666"><path d="M0 0h17L8.500 12z" /></svg>
        </div>
        <Fit w={144} className="ml-[13px] text-[#34641b]"><span className="font-normal">额</span>:2.99<span className="font-normal">亿</span></Fit>
        <Fit w={158} className="ml-[17px] text-[#111]">M5:4.56<span className="font-normal">亿</span></Fit>
        <Fit w={178} className="ml-[17px] text-[#dba02a]">M10:5.00<span className="font-normal">亿</span></Fit>
        <Fit w={197} className="ml-[16px] text-[#e0637a]">M120:1.02<span className="font-normal">亿</span></Fit>
      </div>
      <div className="flex items-center h-[30px] ml-[25px]">
        <Fit w={116} className="font-normal text-[#2b2b2b]">换手率:</Fit>
        <Fit w={91} className="text-[#4aa8e0]">7.99%</Fit>
      </div>
    </div>
  </div>
);

const InfoTabs = () => (
  <div className="h-[68px] overflow-hidden">
    <div className="flex items-center h-[118px] text-[43px] leading-none text-[#666]">
      <Fit w={98} className="ml-[40px] text-[48px] font-bold text-[#222]">看点</Fit>
      <Fit w={87} className="ml-[64px]">资讯</Fit>
      <Fit w={87} className="ml-[69px]">盘口</Fit>
      <Fit w={87} className="ml-[69px]">资金</Fit>
      <Fit w={87} className="ml-[69px]">社区</Fit>
      <Fit w={188} className="ml-[67px]">简况(F10)</Fit>
    </div>
  </div>
);

const DockItem = ({ label, w, children }: { label: string; w: number; children: React.ReactNode }) => (
  <div className="flex flex-col items-center w-[208px] pt-[20px]">
    <svg width="62" height="62" viewBox="0 0 62 62" fill="none" stroke="#d5d5d5" strokeWidth="3">{children}</svg>
    <Fit w={w} className="mt-[7px] text-[33px] leading-[34px] text-[#d5d5d5]">{label}</Fit>
  </div>
);

const Dock = () => (
  <div className="relative h-[197px] bg-[#252525]">
    <div className="flex">
      <div className="flex flex-col items-center w-[248px] pt-[12px]">
        <svg width="26" height="16" fill="#b0b0b0"><path d="M13 0l13 16H0z" /></svg>
        <Fit w={134} className="mt-[18px] text-[33px] leading-[34px] text-[#9a9082]">消费电子</Fit>
        <Fit w={114} className="mt-[25px] text-[35px] leading-[36px] text-[#2ee02e]">-0.36%</Fit>
      </div>
      <DockItem label="下单" w={66}>
        <path d="M13 5h36q6 0 6 6v33L44 57H13q-6 0-6-6V11q0-6 6-6z" />
        <path d="M14 19h34M14 26h34M14 33h34M14 40h24" />
      </DockItem>
      <DockItem label="诊股" w={66}>
        <rect x="4" y="14" width="54" height="40" rx="5" />
        <path d="M20 8.500h22M12 56.500h10M40 56.500h10" />
        <path d="M31 24v20M21 34h20" />
      </DockItem>
      <DockItem label="加自选" w={100}>
        <rect x="8.500" y="9.500" width="45" height="45" strokeWidth="2.500" />
        <path d="M31 19v25M18 31.500h26" strokeWidth="2.500" />
      </DockItem>
      <DockItem label="功能" w={66}>
        <circle cx="31" cy="31" r="24.500" />
        <path d="M20 24h22M20 38.500h22" />
      </DockItem>
    </div>
    <div className="absolute left-[1009px] top-[24px] w-[18px] h-[18px] rounded-full bg-[#e8312f]" />
    <div className="absolute left-[322px] top-[165px] w-[428px] h-[11px] rounded-full bg-[#b2b2b2]" />
  </div>
);

const App = () => (
  <div className={`w-[1080px] h-[2400px] overflow-hidden bg-white ${FONT}`}>
    <Header />
    <Quote />
    <RangeBar />
    <AfterHours />
    <div className="h-[12px] bg-[#f4f4f4]" />
    <PeriodTabs />
    <Legend />
    <PriceChart />
    <DateAxis />
    <SubPanels />
    <div className="h-[12px] bg-[#f4f4f4]" />
    <InfoTabs />
    <Dock />
  </div>
);

export default App;
